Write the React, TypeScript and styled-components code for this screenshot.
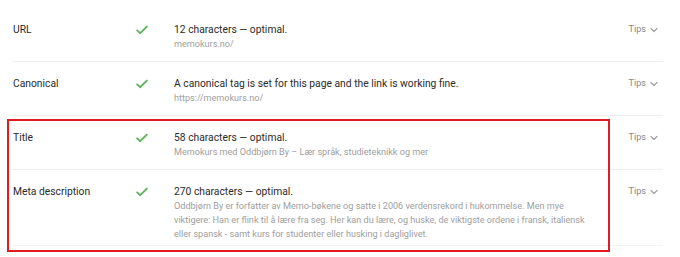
import React from 'react';
import styled, { createGlobalStyle } from 'styled-components';

const GlobalStyle = createGlobalStyle`
  html, body {
    margin: 0;
    padding: 0;
    background: #ffffff;
  }
  body {
    font-family: Roboto, "Liberation Sans", Arial, sans-serif;
  }
`;

const Page = styled.div`
  width: 680px;
  height: 257px;
  overflow: hidden;
  padding: 8px 17px 0 12px;
  box-sizing: border-box;
`;

const Group = styled.div`
  position: relative;
`;

// red annotation frame drawn over the highlighted rows
const Highlight = styled.div`
  position: absolute;
  top: 3px;
  left: -5px;
  width: 603px;
  bottom: -6px;
  border: 2.5px solid #e01b22;
  box-sizing: border-box;
  pointer-events: none;
`;

const Row = styled.div<{ $last?: boolean }>`
  display: grid;
  grid-template-columns: 124px 38px 1fr auto;
  align-items: start;
  min-height: 54px;
  box-sizing: border-box;
  padding: 14px 5px 4px 0;
  border-bottom: ${(p) => (p.$last ? '1px solid #f3f3f3' : '1px solid #eeeeee')};
`;

const Label = styled.div`
  font-size: 10.3px;
  line-height: 15px;
  color: #2a2a2a;
  padding-left: 1px;
`;

const CheckCell = styled.div`
  height: 15px;
  display: flex;
  align-items: center;
`;

const Content = styled.div`
  display: flex;
  flex-direction: column;
`;

const Main = styled.div`
  font-size: 10.3px;
  line-height: 15px;
  color: #2a2a2a;
`;

const Sub = styled.div`
  font-size: 9.1px;
  line-height: 14px;
  color: #9e9e9e;
  white-space: nowrap;
`;

const Tips = styled.div`
  display: flex;
  align-items: center;
  gap: 4px;
  font-size: 9.1px;
  line-height: 15px;
  color: #888888;
`;

const Check = () => (
  <svg width="12" height="10" viewBox="0 0 12 10">
    <polyline
      points="1.2,5.4 4.3,8.2 10.8,1.6"
      fill="none"
      stroke="#5cb55a"
      strokeWidth="1.9"
      strokeLinecap="round"
      strokeLinejoin="round"
    />
  </svg>
);

const Chevron = () => (
  <svg width="8" height="6" viewBox="0 0 8 6">
    <polyline
      points="1,1.5 4,4.5 7,1.5"
      fill="none"
      stroke="#a0a0a0"
      strokeWidth="1.2"
      strokeLinecap="round"
      strokeLinejoin="round"
    />
  </svg>
);

interface CheckRowProps {
  label: string;
  main: string;
  sub: string[];
  last?: boolean;
}

const CheckRow = ({ label, main, sub, last }: CheckRowProps) => (
  <Row $last={last}>
    <Label>{label}</Label>
    <CheckCell>
      <Check />
    </CheckCell>
    <Content>
      <Main>{main}</Main>
      {sub.map((line, i) => (
        <Sub key={i}>{line}</Sub>
      ))}
    </Content>
    <Tips>
      Tips
      <Chevron />
    </Tips>
  </Row>
);

const App = () => (
  <>
    <GlobalStyle />
    <Page>
      <CheckRow label="URL" main="12 characters — optimal." sub={['memokurs.no/']} />
      <CheckRow
        label="Canonical"
        main="A canonical tag is set for this page and the link is working fine."
        sub={['https://memokurs.no/']}
      />
      <Group>
        <CheckRow
          label="Title"
          main="58 characters — optimal."
          sub={['Memokurs med Oddbjørn By – Lær språk, studieteknikk og mer']}
        />
        <CheckRow
          label="Meta description"
          main="270 characters — optimal."
          sub={[
            'Oddbjørn By er forfatter av Memo-bøkene og satte i 2006 verdensrekord i hukommelse. Men mye',
            'viktigere: Han er flink til å lære fra seg. Her kan du lære, og huske, de viktigste ordene i fransk, italiensk',
            'eller spansk - samt kurs for studenter eller husking i dagliglivet.',
          ]}
          last
        />
        <Highlight />
      </Group>
    </Page>
  </>
);

export default App;
